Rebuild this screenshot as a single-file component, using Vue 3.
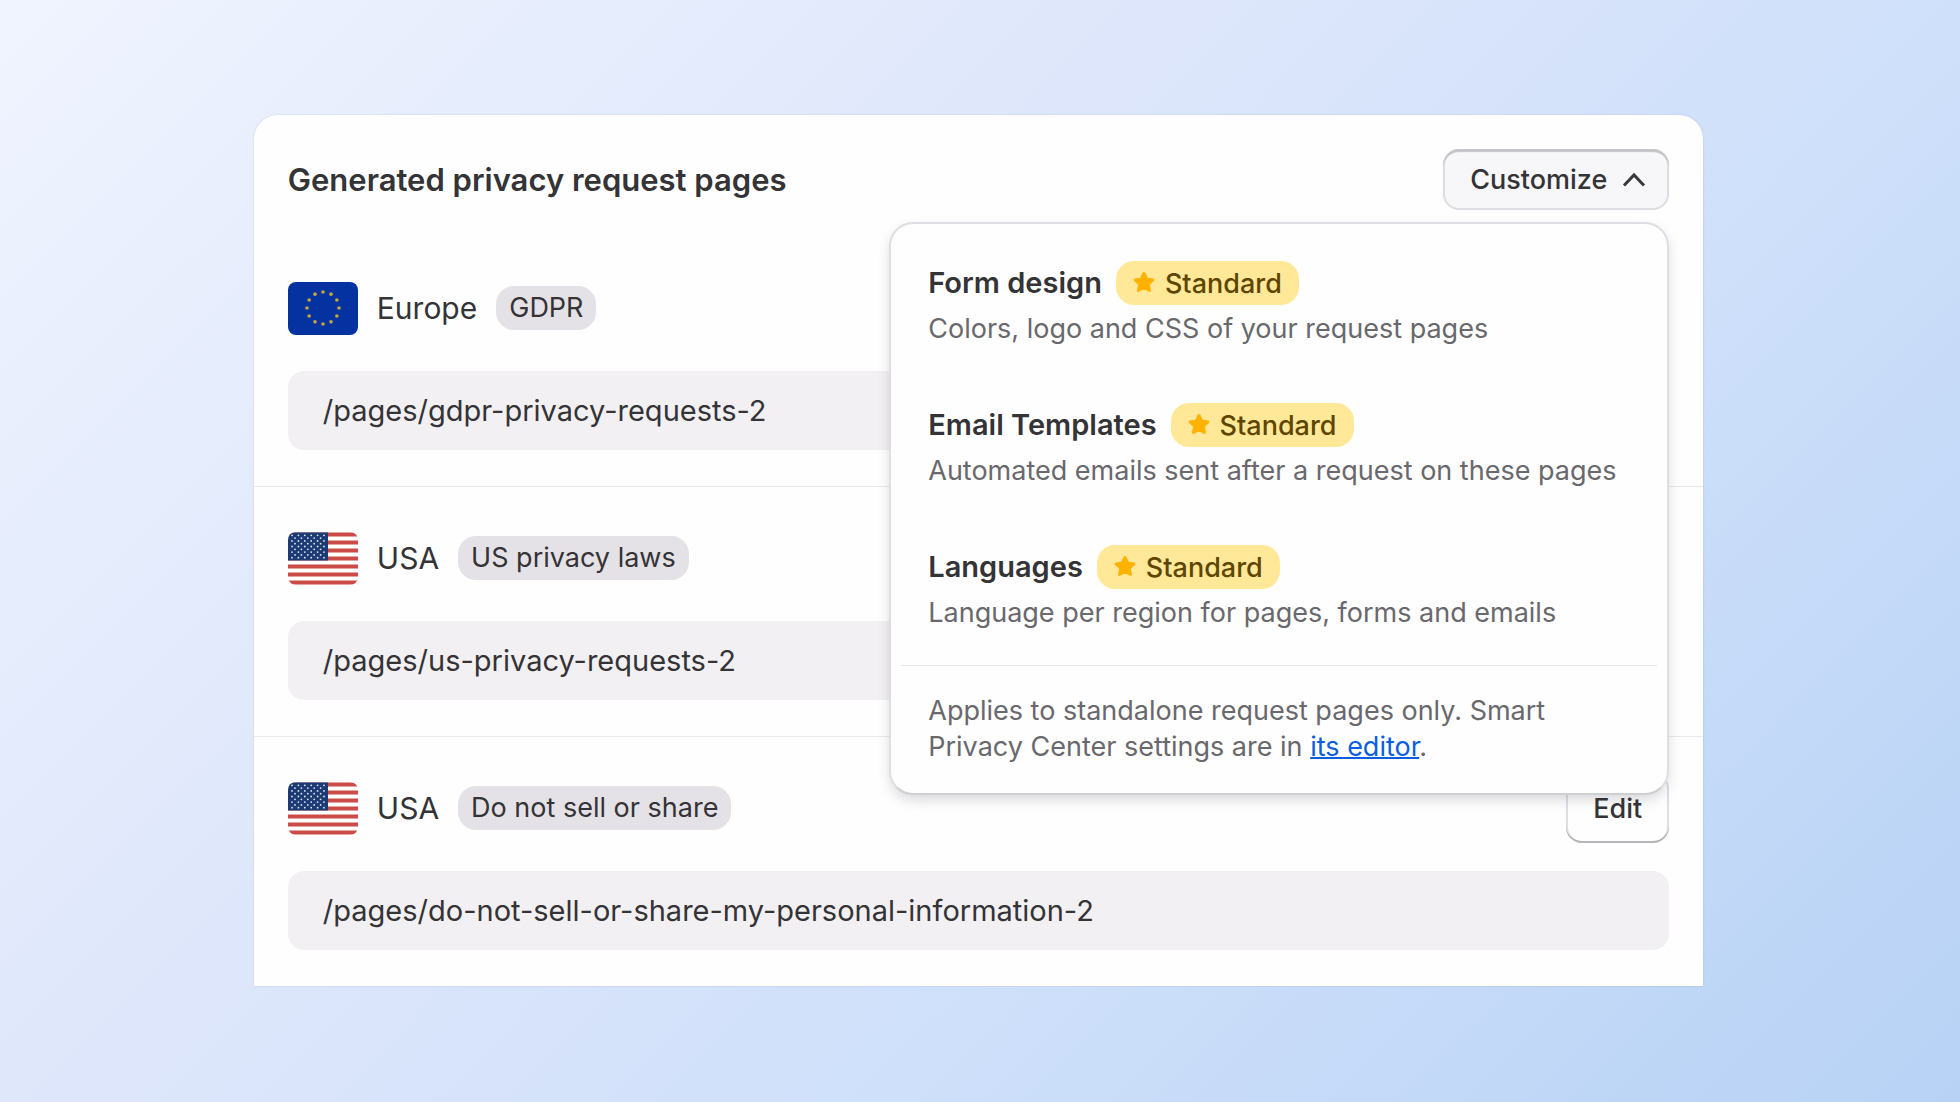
<script setup>
import { ref } from 'vue'

const open = ref(true)

const pages = [
  { flag: 'eu', region: 'Europe', law: 'GDPR', path: '/pages/gdpr-privacy-requests-2' },
  { flag: 'us', region: 'USA', law: 'US privacy laws', path: '/pages/us-privacy-requests-2' },
  { flag: 'us', region: 'USA', law: 'Do not sell or share', path: '/pages/do-not-sell-or-share-my-personal-information-2' },
]

const options = [
  { title: 'Form design', text: 'Colors, logo and CSS of your request pages' },
  { title: 'Email Templates', text: 'Automated emails sent after a request on these pages' },
  { title: 'Languages', text: 'Language per region for pages, forms and emails' },
]

// Twelve stars on a circle
const euStars = Array.from({ length: 12 }, (_, i) => ({
  x: 35 + 16 * Math.sin((i * Math.PI) / 6),
  y: 26 - 16 * Math.cos((i * Math.PI) / 6),
}))

// Nine staggered rows of six and five stars
const usStars = []
for (let r = 0; r < 9; r++) {
  const n = r % 2 ? 5 : 6
  for (let c = 0; c < n; c++) usStars.push({ x: (r % 2 ? 7 : 4) + c * 6.4, y: 2.8 + r * 2.8 })
}
</script>

<template>
  <main class="stage">
    <section class="card">
      <header class="head">
        <h1>Generated privacy request pages</h1>
        <div class="dropdown">
          <button class="btn customize" type="button" aria-haspopup="true" :aria-expanded="open" @click="open = !open">
            Customize
            <svg width="24" height="16" viewBox="0 0 24 16" aria-hidden="true">
              <path d="M2 13.5 12 3l10 10.5" fill="none" stroke="#39383b" stroke-width="3" />
            </svg>
          </button>
          <div v-if="open" class="menu">
            <button v-for="o in options" :key="o.title" class="option" type="button">
              <span class="option-head">
                <span class="option-title">{{ o.title }}</span>
                <span class="plan">
                  <svg width="22" height="22" viewBox="0 0 22 22" aria-hidden="true">
                    <path
                      d="M11 1.500l2.700 5.600 6.200.8-4.600 4.300 1.200 6.200L11 15.500l-5.500 2.900 1.200-6.200L2.100 7.900l6.200-.8z"
                      fill="#ffb200" stroke="#ffb200" stroke-width="3" stroke-linejoin="round"
                    />
                  </svg>
                  Standard
                </span>
              </span>
              <span class="option-text">{{ o.text }}</span>
            </button>
            <hr />
            <p class="note">
              Applies to standalone request pages only. Smart Privacy Center settings are in
              <a href="#">its editor</a>.
            </p>
          </div>
        </div>
      </header>

      <article v-for="p in pages" :key="p.path" class="page">
        <div class="row">
          <svg v-if="p.flag === 'eu'" class="flag" viewBox="0 0 70 53" aria-hidden="true">
            <rect width="70" height="53" fill="#0432a0" />
            <circle v-for="(s, i) in euStars" :key="i" :cx="s.x" :cy="s.y" r="1.8" fill="#c9a63c" />
          </svg>
          <svg v-else class="flag" viewBox="0 0 70 52" aria-hidden="true">
            <rect width="70" height="52" fill="#fff" />
            <rect v-for="i in 7" :key="i" :y="(i - 1) * 8" width="70" height="4" fill="#cb4b46" />
            <rect width="40" height="28" fill="#1c3a74" />
            <circle v-for="(s, i) in usStars" :key="'s' + i" :cx="s.x" :cy="s.y" r="0.9" fill="#dfe6f2" />
          </svg>
          <h2>{{ p.region }}</h2>
          <span class="law">{{ p.law }}</span>
          <button class="btn edit" type="button">Edit</button>
        </div>
        <div class="path">{{ p.path }}</div>
      </article>
    </section>
  </main>
</template>

<style>
body {
  margin: 0;
}
</style>

<style scoped>
.stage {
  box-sizing: border-box;
  min-height: 100vh;
  padding: 115px 13.1% 116px 12.95%;
  background: linear-gradient(135deg, #eff4fe 0%, #dfe7fb 36%, #cfe0fa 64%, #b7d2f5 100%);
  font-family: Inter, sans-serif;
  color: #343336;
}

.card {
  background: #fefefe;
  border-radius: 24px 24px 0 0;
  box-shadow: 0 0 2px rgba(60, 60, 90, 0.18);
}

.head {
  display: flex;
  align-items: center;
  justify-content: space-between;
  padding: 34px 34px 27px;
}

h1,
h2 {
  margin: 0;
}

h1 {
  font-size: 31px;
  font-weight: 600;
  line-height: 40px;
}

.btn {
  font: inherit;
  font-size: 27px;
  font-weight: 500;
  color: inherit;
  border: 0;
  border-radius: 16px;
}

.dropdown {
  position: relative;
}

.customize {
  display: flex;
  align-items: center;
  gap: 15px;
  height: 61px;
  padding: 0 23px 0 27px;
  background: #f7f6f9;
  box-shadow: inset 0 3px 1px #c4c3c7, inset 0 0 0 2px #dedde1;
}

.menu {
  position: absolute;
  z-index: 1;
  top: 73px;
  right: 0;
  box-sizing: border-box;
  width: 780px;
  padding: 9px 10px 28px;
  background: #fefefe;
  border: 2px solid #dfdee3;
  border-bottom-color: #cfced4;
  border-radius: 24px;
  box-shadow: 0 6px 14px -2px rgba(50, 45, 60, 0.2);
}

.option {
  display: flex;
  flex-direction: column;
  gap: 6px;
  width: 100%;
  padding: 28px 27px;
  border: 0;
  background: none;
  font: inherit;
  color: inherit;
  text-align: left;
}

.option-head {
  display: flex;
  align-items: center;
  gap: 14px;
}

.option-title {
  font-size: 29px;
  font-weight: 600;
  line-height: 44px;
}

.plan {
  display: flex;
  align-items: center;
  gap: 10px;
  height: 44px;
  padding: 0 17px;
  border-radius: 18px;
  background: #ffe999;
  color: #5f4600;
  font-size: 27px;
  font-weight: 500;
}

.option-text,
.note {
  font-size: 27px;
  line-height: 36px;
  color: #69686c;
}

hr {
  height: 1px;
  margin: 6px 0 0;
  border: 0;
  background: #e6e5ec;
}

.note {
  margin: 0;
  padding: 27px 27px 0;
}

.note a {
  color: #0a5fe0;
  text-decoration-thickness: 2px;
}

.page {
  display: flex;
  flex-direction: column;
  gap: 28px;
  padding: 36px 34px;
}

.page + .page {
  border-top: 1px solid #e9e8ec;
}

.row {
  display: flex;
  align-items: center;
}

.flag {
  width: 70px;
  height: 53px;
  border-radius: 8px;
}

h2 {
  margin: 0 19px;
  font-size: 30px;
  font-weight: 400;
  line-height: 40px;
}

.law {
  padding: 0 13px;
  border-radius: 18px;
  background: #e4e2e6;
  font-size: 27px;
  line-height: 44px;
}

.edit {
  height: 70px;
  margin-left: auto;
  padding: 0 27px;
  background: #fefefe;
  box-shadow: inset 0 -2px 0 #b5b4b9, inset 0 0 0 2px #dfdee3;
}

.path {
  padding: 0 35px;
  border-radius: 16px;
  background: #f2f0f3;
  font-size: 29px;
  line-height: 79px;
  overflow-wrap: anywhere;
}
</style>
